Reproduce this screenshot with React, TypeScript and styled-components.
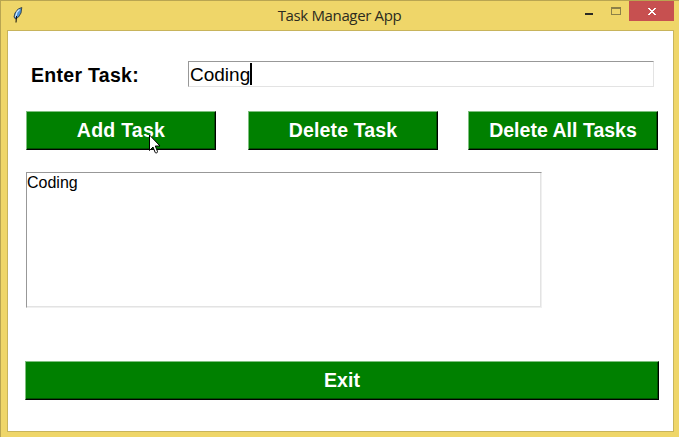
import React from 'react';
import styled, { createGlobalStyle } from 'styled-components';

const GlobalStyle = createGlobalStyle`
  * { box-sizing: border-box; }
  body { margin: 0; overflow: hidden; }
`;

const Window = styled.div`
  position: relative;
  display: flex;
  flex-direction: column;
  width: 679px;
  height: 437px;
  padding: 0 5px 5px 6px;
  background: #efd669;
  border-top: 1px solid #b9a551;
  border-left: 1px solid #b9a551;
  font-family: 'Liberation Sans', Arial, sans-serif;
  color: #000;
`;

const TitleBar = styled.header`
  display: grid;
  grid-template-columns: 117px 1fr 119px;
  height: 29px;
  flex: none;
`;

const AppIcon = styled.svg`
  display: block;
  margin: 6px 0 0 6px;
`;

const Title = styled.h1`
  margin: 0;
  text-align: center;
  font: 400 15px/28px 'Open Sans', 'Noto Sans', sans-serif;
  letter-spacing: -0.35px;
  white-space: nowrap;
  color: #2c2b20;
`;

const WindowControls = styled.div`
  display: flex;
  justify-content: flex-end;
  align-items: flex-start;
`;

const ControlButton = styled.button<{ $width: number; $danger?: boolean }>`
  display: block;
  width: ${({ $width }) => $width}px;
  height: 20px;
  padding: 0;
  border: 0;
  background: ${({ $danger }) => ($danger ? '#c75050' : 'transparent')};

  svg { display: block; }
`;

const Client = styled.main`
  display: flex;
  flex-direction: column;
  width: 667px;
  height: 402px;
  padding: 30px 14px 0 17px;
  background: #fff;
  border: 1px solid #c8b45b;
`;

const EntryRow = styled.div`
  display: flex;
  height: 26px;
  padding-left: 6px;
`;

const EntryLabel = styled.label`
  width: 157px;
  font-size: 19.5px;
  font-weight: 700;
  line-height: 28px;
  white-space: nowrap;
  letter-spacing: 0.3px;
`;

const Entry = styled.div`
  display: flex;
  width: 466px;
  padding-left: 1px;
  border: 1px solid;
  border-color: #989898 #e3e3e3 #e3e3e3 #989898;
  font-size: 19px;
  line-height: 25px;
`;

const Caret = styled.span`
  width: 2px;
  height: 22px;
  margin-top: 1px;
  background: #000;
`;

const ButtonRow = styled.div`
  display: grid;
  grid-template-columns: 190px 190px 190px;
  column-gap: 32px;
  margin: 24px 0 0 1px;

  button:last-child { margin-left: -2px; }
`;

const TaskButton = styled.button<{ $spacing?: number }>`
  display: block;
  width: 100%;
  height: 39px;
  padding: 0;
  border: 1px solid;
  border-color: #7fbf7f #000 #000 #7fbf7f;
  box-shadow: inset -1px -1px #005000;
  background: #008000;
  color: #fff;
  font: 700 19.5px/37px 'Liberation Sans', Arial, sans-serif;
  letter-spacing: ${({ $spacing = 0 }) => $spacing}px;
  text-align: center;
  white-space: nowrap;
`;

const TaskList = styled.ul`
  width: 516px;
  height: 136px;
  margin: 22px 0 53px 1px;
  padding: 0;
  list-style: none;
  border: 1px solid;
  border-color: #989898 #f0f0f0 #f0f0f0 #989898;
  box-shadow: inset -1px -1px #e3e3e3;
`;

const TaskItem = styled.li`
  font-size: 16px;
  line-height: 19px;
`;

const ExitRow = styled.div`
  width: 634px;
`;

const Pointer = styled.svg`
  position: absolute;
  left: 147px;
  top: 133px;
`;

export default function App() {
  return (
    <>
      <GlobalStyle />
      <Window>
        <TitleBar>
          <AppIcon width="10" height="17" viewBox="0 0 10 17">
            <path d="M8.8.5 5.2 2 2 6 1 10l1.5 2L5.5 10l2.5-4Z" fill="#4c94d8" stroke="#252d36" strokeWidth="0.8" />
            <path d="M6.5 2.5 4 5 2.5 10" fill="none" stroke="#d3eaff" strokeWidth="1.2" />
            <path d="M3.5 9 3 15.5" fill="none" stroke="#080808" />
          </AppIcon>
          <Title>Task Manager App</Title>
          <WindowControls>
            <ControlButton $width={27} aria-label="Minimize">
              <svg width="27" height="20" shapeRendering="crispEdges">
                <path d="M10 12h8v2h-8z" fill="#2b2a24" />
              </svg>
            </ControlButton>
            <ControlButton $width={27} aria-label="Maximize">
              <svg width="27" height="20" shapeRendering="crispEdges">
                <path d="M9 6h10v8H9zM10 8v5h8V8z" fillRule="evenodd" fill="#8c8048" />
              </svg>
            </ControlButton>
            <ControlButton $width={45} $danger aria-label="Close">
              <svg width="45" height="20" shapeRendering="crispEdges">
                <path
                  d="M19 7h2v1h1v1h2V8h1V7h2v1h-1v1h-1v1h-1v1h1v1h1v1h1v1h-2v-1h-1v-1h-2v1h-1v1h-2v-1h1v-1h1v-1h1v-1h-1V9h-1V8h-1z"
                  fill="#fff"
                />
              </svg>
            </ControlButton>
          </WindowControls>
        </TitleBar>
        <Client>
          <EntryRow>
            <EntryLabel>Enter Task:</EntryLabel>
            <Entry>
              <span>Coding</span>
              <Caret />
            </Entry>
          </EntryRow>
          <ButtonRow>
            <TaskButton $spacing={0.25}>Add Task</TaskButton>
            <TaskButton $spacing={0.12}>Delete Task</TaskButton>
            <TaskButton $spacing={0.02}>Delete All Tasks</TaskButton>
          </ButtonRow>
          <TaskList>
            <TaskItem>Coding</TaskItem>
          </TaskList>
          <ExitRow>
            <TaskButton>Exit</TaskButton>
          </ExitRow>
        </Client>
        <Pointer width="13" height="21" viewBox="0 0 13 21">
          <path
            d="M1.5 1v15.5L5 13l2.2 5.5c.4 1 2.8.2 2.3-1L7.3 12H12Z"
            fill="#fff"
            stroke="#000"
            strokeWidth="1"
          />
        </Pointer>
      </Window>
    </>
  );
}
